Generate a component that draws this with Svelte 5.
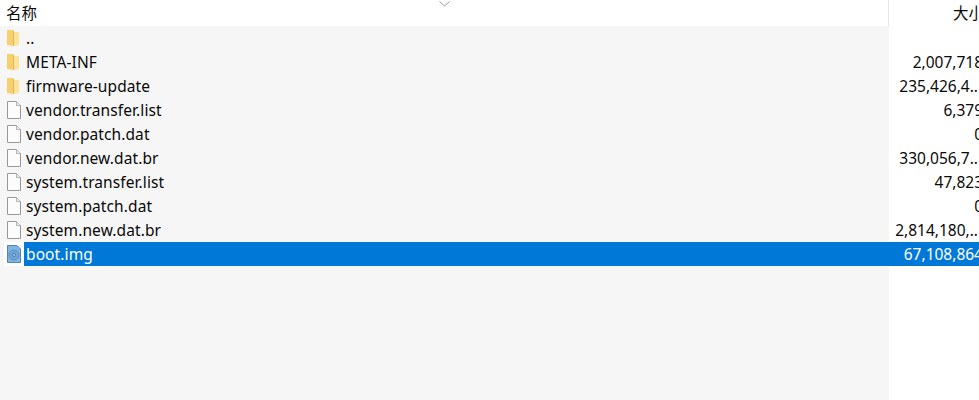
<script lang="ts">
	const files = [
		{ name: '..', size: '', icon: 'folder' },
		{ name: 'META-INF', size: '2,007,718', icon: 'folder' },
		{ name: 'firmware-update', size: '235,426,4..', icon: 'folder', cut: true },
		{ name: 'vendor.transfer.list', size: '6,379', icon: 'file' },
		{ name: 'vendor.patch.dat', size: '0', icon: 'file' },
		{ name: 'vendor.new.dat.br', size: '330,056,7..', icon: 'file', cut: true },
		{ name: 'system.transfer.list', size: '47,823', icon: 'file' },
		{ name: 'system.patch.dat', size: '0', icon: 'file' },
		{ name: 'system.new.dat.br', size: '2,814,180,..', icon: 'file', cut: true },
		{ name: 'boot.img', size: '67,108,864', icon: 'disc', selected: true }
	];
</script>

<div class="table">
	<div class="head">
		<div class="col-name">名称</div>
		<svg class="sort" width="11" height="6" viewBox="0 0 11 6">
			<path d="M0.5 0.5 L5.5 5 L10.5 0.5" fill="none" stroke="#999" />
		</svg>
		<div class="col-size">大小</div>
	</div>
	<div class="body">
		{#each files as file}
			<div class="row" class:selected={file.selected}>
				<div class="icon">
					{#if file.icon === 'folder'}
						<svg width="18" height="20" viewBox="0 0 18 20">
							<path d="M2 2 H8 L9 3 V18 L2 17 Z" fill="#f6d070" />
							<path d="M9 4 H14 V17 L9 18 Z" fill="#fde39a" />
							<path d="M8 3 H9 V18 H8 Z" fill="#e4b654" />
						</svg>
					{:else if file.icon === 'file'}
						<svg width="18" height="20" viewBox="0 0 18 20">
							<path d="M2.5 1.5 H11.5 L15.5 5.5 V18.5 H2.5 Z" fill="#fcfcfc" stroke="#9a9a9a" />
							<path d="M11.5 1.5 V5.5 H15.5" fill="#eee" stroke="#b4b4b4" />
						</svg>
					{:else}
						<svg width="18" height="20" viewBox="0 0 18 20">
							<path d="M2.5 1.5 H12 L15.5 5 V18.5 H2.5 Z" fill="#80b4e2" stroke="#4f86b8" />
							<circle cx="9" cy="11" r="5" fill="#6ea3d3" stroke="#5c92c4" />
							<circle cx="9" cy="11" r="1.6" fill="#8fbde6" stroke="#4f86b8" />
						</svg>
					{/if}
				</div>
				<div class="name">{file.name}</div>
				<div class="size" class:cut={file.cut}>{file.size}</div>
			</div>
		{/each}
	</div>
</div>

<style>
	:global(body) {
		background: #fff;
		overflow: hidden;
	}

	.table {
		width: 979px;
		height: 400px;
		overflow: hidden;
		display: flex;
		flex-direction: column;
		font-family: 'Noto Sans', 'Noto Sans CJK SC', sans-serif;
		font-size: 15.5px;
		color: #0a0a0a;
	}

	.head {
		position: relative;
		display: grid;
		grid-template-columns: 889px 90px;
		height: 26px;
		flex: none;
		line-height: 26px;
	}

	.col-name {
		padding-left: 6px;
		border-right: 1px solid #e5e5e5;
	}

	.col-size {
		padding-left: 64px;
		white-space: nowrap;
	}

	.sort {
		position: absolute;
		left: 439px;
		top: 1px;
	}

	.body {
		flex: 1;
		background: linear-gradient(to right, #f6f6f6 889px, #fff 889px);
	}

	.row {
		display: grid;
		grid-template-columns: 24px 865px 90px;
		height: 24px;
		line-height: 24px;
	}

	.icon {
		display: flex;
		align-items: center;
		padding-left: 5px;
	}

	.name {
		padding-left: 2px;
		letter-spacing: 0.1px;
	}

	.size {
		text-align: right;
		white-space: nowrap;
		margin-right: -4px;
	}

	.size.cut {
		margin-right: 1px;
	}

	.selected .icon {
		background: #fff;
		margin-left: 4px;
		padding-left: 1px;
	}

	.selected .name,
	.selected .size {
		background: #0078d7;
		color: #fff;
	}
</style>
